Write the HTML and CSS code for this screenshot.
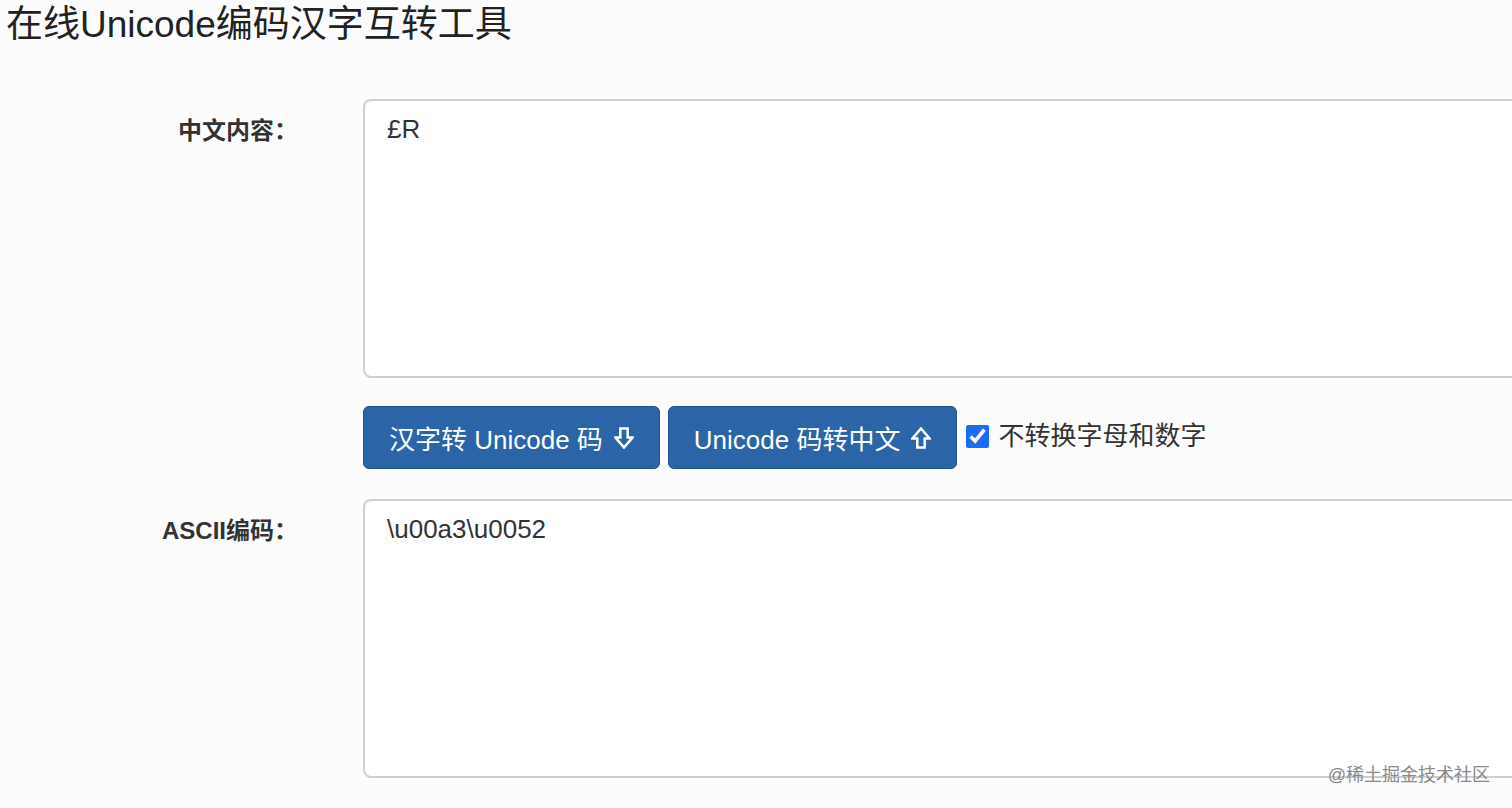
FILE: index.html
```html
<!DOCTYPE html>
<html lang="zh-CN">
<head>
<meta charset="UTF-8">
<meta name="viewport" content="width=device-width, initial-scale=1.0">
<title>在线Unicode编码汉字互转工具</title>
<link rel="stylesheet" href="styles.css">
</head>
<body>
    <h1 class="title">在线Unicode编码汉字互转工具</h1>
    <div class="form">
        <div class="row">
            <label class="label" for="source">中文内容：</label>
            <textarea id="source" class="box">£R</textarea>
        </div>
        <div class="row actions">
            <div class="spacer"></div>
            <button class="btn">汉字转 Unicode 码
                <svg class="arrow" viewBox="0 0 20 22" width="20" height="22"><path d="M6.3 1.5 H13.7 V10.5 H18.5 L10 20.5 L1.5 10.5 H6.3 Z" fill="none" stroke="#fff" stroke-width="2.5" stroke-linejoin="miter"/></svg>
            </button>
            <button class="btn">Unicode 码转中文
                <svg class="arrow" viewBox="0 0 20 22" width="20" height="22"><path d="M6.3 20.5 H13.7 V11.5 H18.5 L10 1.5 L1.5 11.5 H6.3 Z" fill="none" stroke="#fff" stroke-width="2.5" stroke-linejoin="miter"/></svg>
            </button>
            <label class="check"><input type="checkbox" checked>不转换字母和数字</label>
        </div>
        <div class="row">
            <label class="label" for="result">ASCII编码：</label>
            <textarea id="result" class="box">\u00a3\u0052</textarea>
        </div>
    </div>
    <div class="watermark">@稀土掘金技术社区</div>
</body>
</html>
```

FILE: styles.css
```css
html, body {
    overflow: hidden;
}
body {
    margin: 0;
    padding: 0;
    background-color: #fcfcfc;
    font-family: "Liberation Sans", "Noto Sans CJK SC", sans-serif;
    color: #333;
    position: relative;
    height: 808px;
}
.title {
    margin: 0;
    padding: 3px 0 0 6px;
    font-size: 37px;
    font-weight: normal;
    line-height: 44px;
    color: #222;
}
.form {
    padding-top: 52px;
}
.row {
    display: flex;
    align-items: flex-start;
}
.label, .spacer {
    flex: 0 0 298px;
    width: 298px;
    margin-right: 65px;
    text-align: right;
    font-weight: bold;
    font-size: 24px;
    line-height: 32px;
    padding-top: 16px;
    color: #333;
}
.spacer {
    padding-top: 0;
}
.box {
    flex: 0 0 1200px;
    width: 1200px;
    height: 279px;
    box-sizing: border-box;
    padding: 10px 22px;
    border: 2px solid #cfcfcf;
    border-radius: 8px;
    background-color: #fff;
    font-family: "Liberation Sans", "Noto Sans CJK SC", sans-serif;
    font-size: 26px;
    line-height: 37px;
    color: #333;
    resize: none;
    outline: none;
}
.actions {
    margin: 28px 0 30px;
    align-items: flex-start;
}
.btn {
    display: flex;
    align-items: center;
    gap: 11px;
    height: 63px;
    padding: 0 25px;
    margin-right: 8px;
    background-color: #2b65a8;
    border: 1px solid #1f5290;
    border-radius: 6px;
    color: #fff;
    font-family: "Liberation Sans", "Noto Sans CJK SC", sans-serif;
    font-size: 26px;
    white-space: nowrap;
    cursor: pointer;
}
.arrow {
    display: block;
    flex: none;
}
.check {
    display: flex;
    align-items: center;
    gap: 9px;
    margin-top: 14px;
    font-size: 26px;
    line-height: 32px;
    color: #333;
}
.check input {
    width: 23px;
    height: 23px;
    margin: 0 0 0 1px;
    accent-color: #1a6cf5;
}
.watermark {
    position: absolute;
    right: 22px;
    bottom: 22px;
    font-size: 18px;
    color: #8a8a8a;
}
```
